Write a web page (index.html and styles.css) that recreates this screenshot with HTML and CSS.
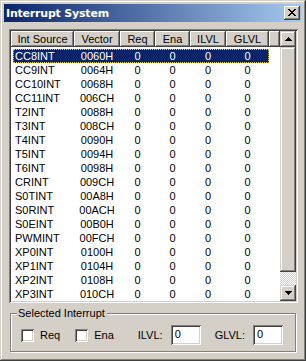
FILE: index.html
```html
<!DOCTYPE html>
<html lang="en">
<head>
    <meta charset="UTF-8">
    <title>Interrupt System</title>
    <link rel="stylesheet" href="styles.css">
</head>
<body>
    <div class="window">
        <div class="title-bar">
            <span class="title">Interrupt System</span>
            <button class="close-btn">
                <svg width="8" height="7" viewBox="0 0 8 7"><path d="M0 0h2v1h1v1h2v-1h1v-1h2v1h-1v1h-1v1h-1v1h1v1h1v1h1v1h-2v-1h-1v-1h-2v1h-1v1h-2v-1h1v-1h1v-1h1v-1h-1v-1h-1v-1h-1z" fill="#000"/></svg>
            </button>
        </div>

        <div class="list-view">
            <div class="list-body">
                <div class="list-header">
                    <div class="hcell">Int Source</div>
                    <div class="hcell">Vector</div>
                    <div class="hcell">Req</div>
                    <div class="hcell">Ena</div>
                    <div class="hcell">ILVL</div>
                    <div class="hcell">GLVL</div>
                    <div class="hcell filler"></div>
                </div>
                <div class="rows" id="rows"></div>
            </div>
            <div class="scrollbar">
                <div class="sb-btn">
                    <svg width="7" height="4" viewBox="0 0 7 4"><path d="M3 0h1v1h1v1h1v1h1v1h-7v-1h1v-1h1v-1h1z" fill="#000"/></svg>
                </div>
                <div class="sb-thumb"></div>
                <div class="sb-track"></div>
                <div class="sb-btn">
                    <svg width="7" height="4" viewBox="0 0 7 4"><path d="M0 0h7v1h-1v1h-1v1h-1v1h-1v-1h-1v-1h-1v-1h-1z" fill="#000"/></svg>
                </div>
            </div>
        </div>

        <div class="group">
            <div class="group-label">Selected Interrupt</div>
            <div class="group-row">
                <label class="check"><span class="box"></span>Req</label>
                <label class="check ena"><span class="box"></span>Ena</label>
                <span class="field-label ilvl">ILVL:</span>
                <span class="edit">0</span>
                <span class="field-label glvl">GLVL:</span>
                <span class="edit">0</span>
            </div>
        </div>
    </div>

    <script>
        const sources = [
            ['CC8INT', '0060H'], ['CC9INT', '0064H'], ['CC10INT', '0068H'],
            ['CC11INT', '006CH'], ['T2INT', '0088H'], ['T3INT', '008CH'],
            ['T4INT', '0090H'], ['T5INT', '0094H'], ['T6INT', '0098H'],
            ['CRINT', '009CH'], ['S0TINT', '00A8H'], ['S0RINT', '00ACH'],
            ['S0EINT', '00B0H'], ['PWMINT', '00FCH'], ['XP0INT', '0100H'],
            ['XP1INT', '0104H'], ['XP2INT', '0108H'], ['XP3INT', '010CH']
        ];

        const rows = document.getElementById('rows');
        sources.forEach((src, i) => {
            const row = document.createElement('div');
            row.className = i === 0 ? 'row selected' : 'row';
            row.innerHTML = `<span class="name">${src[0]}</span><span>${src[1]}</span>` +
                '<span>0</span><span>0</span><span>0</span><span>0</span>';
            rows.appendChild(row);
        });
    </script>
</body>
</html>
```

FILE: styles.css
```css
body {
    margin: 0;
    background-color: #d4d0c8;
    font-family: "Liberation Sans", Arial, sans-serif;
    font-size: 11px;
    color: #000;
}

.window {
    width: 306px;
    height: 361px;
    box-sizing: border-box;
    padding: 4px;
    background-color: #d4d0c8;
    box-shadow: inset -1px -1px #404040, inset 1px 1px #d4d0c8,
                inset -2px -2px #808080, inset 2px 2px #fff;
    display: flex;
    flex-direction: column;
}

.title-bar {
    height: 18px;
    background: linear-gradient(to right, #0a246a, #a6caf0);
    display: flex;
    align-items: center;
    justify-content: space-between;
    padding: 0 2px 0 2px;
}

.title {
    color: #fff;
    font-family: "DejaVu Sans", sans-serif;
    font-weight: bold;
    font-size: 11px;
    letter-spacing: -0.2px;
}

.close-btn {
    width: 16px;
    height: 14px;
    padding: 0;
    border: none;
    background-color: #d4d0c8;
    box-shadow: inset -1px -1px #404040, inset 1px 1px #fff,
                inset -2px -2px #808080, inset 2px 2px #d4d0c8;
    display: flex;
    align-items: center;
    justify-content: center;
}

.close-btn svg {
    margin: 0 1px 1px 0;
}

/* list view */
.list-view {
    margin: 7px 4px 0 5px;
    height: 274px;
    box-sizing: border-box;
    padding: 2px;
    background-color: #fff;
    box-shadow: inset 1px 1px #808080, inset -1px -1px #fff,
                inset 2px 2px #404040, inset -2px -2px #d4d0c8;
    display: flex;
}

.list-body {
    flex: 1;
    overflow: hidden;
}

.list-header {
    display: grid;
    grid-template-columns: 63px 46px 35px 35px 36px 43px 1fr;
    height: 16px;
}

.hcell {
    background-color: #d4d0c8;
    box-shadow: inset -1px -1px #404040, inset 1px 1px #fff,
                inset -2px -2px #808080;
    text-align: center;
    line-height: 16px;
}

.rows {
    padding: 2px 0 0 2px;
}

.row {
    display: grid;
    grid-template-columns: 61px 46px 35px 35px 36px 43px;
    width: 256px;
    height: 14px;
    line-height: 14px;
    text-align: center;
}

.row .name {
    text-align: left;
    padding-left: 2px;
}

.row.selected {
    background-color: #0a246a;
    color: #fff;
    outline: 1px dotted #e6c85a;
    outline-offset: -1px;
}

/* scrollbar */
.scrollbar {
    width: 16px;
    display: flex;
    flex-direction: column;
}

.sb-btn,
.sb-thumb {
    background-color: #d4d0c8;
    box-shadow: inset -1px -1px #404040, inset 1px 1px #d4d0c8,
                inset -2px -2px #808080, inset 2px 2px #fff;
}

.sb-btn {
    height: 16px;
    display: flex;
    align-items: center;
    justify-content: center;
}

.sb-thumb {
    height: 225px;
}

.sb-track {
    flex: 1;
    background: repeating-conic-gradient(#d4d0c8 0 25%, #fff 0 50%) 0 0 / 2px 2px;
}

/* group box */
.group {
    margin: 10px 6px 0 6px;
    height: 39px;
    box-sizing: border-box;
    border: 1px solid #808080;
    box-shadow: inset 1px 1px #fff, 1px 1px #fff;
}

.group-label {
    width: fit-content;
    margin: -7px 0 0 6px;
    padding: 0 2px 0 1px;
    background-color: #d4d0c8;
    line-height: 13px;
}

.group-row {
    display: flex;
    align-items: center;
    padding: 5px 0 0 10px;
}

.check {
    display: flex;
    align-items: center;
}

.box {
    width: 13px;
    height: 13px;
    background-color: #fff;
    box-shadow: inset 1px 1px #808080, inset -1px -1px #fff,
                inset 2px 2px #404040, inset -2px -2px #d4d0c8;
    margin-right: 6px;
}

.check.ena {
    margin-left: 15px;
}

.field-label.ilvl {
    margin-left: 24px;
}

.field-label.glvl {
    margin-left: 14px;
}

.edit {
    width: 30px;
    height: 20px;
    box-sizing: border-box;
    padding: 3px 0 0 4px;
    background-color: #fff;
    box-shadow: inset 1px 1px #808080, inset -1px -1px #fff,
                inset 2px 2px #404040, inset -2px -2px #d4d0c8;
    margin-left: 8px;
}
```
